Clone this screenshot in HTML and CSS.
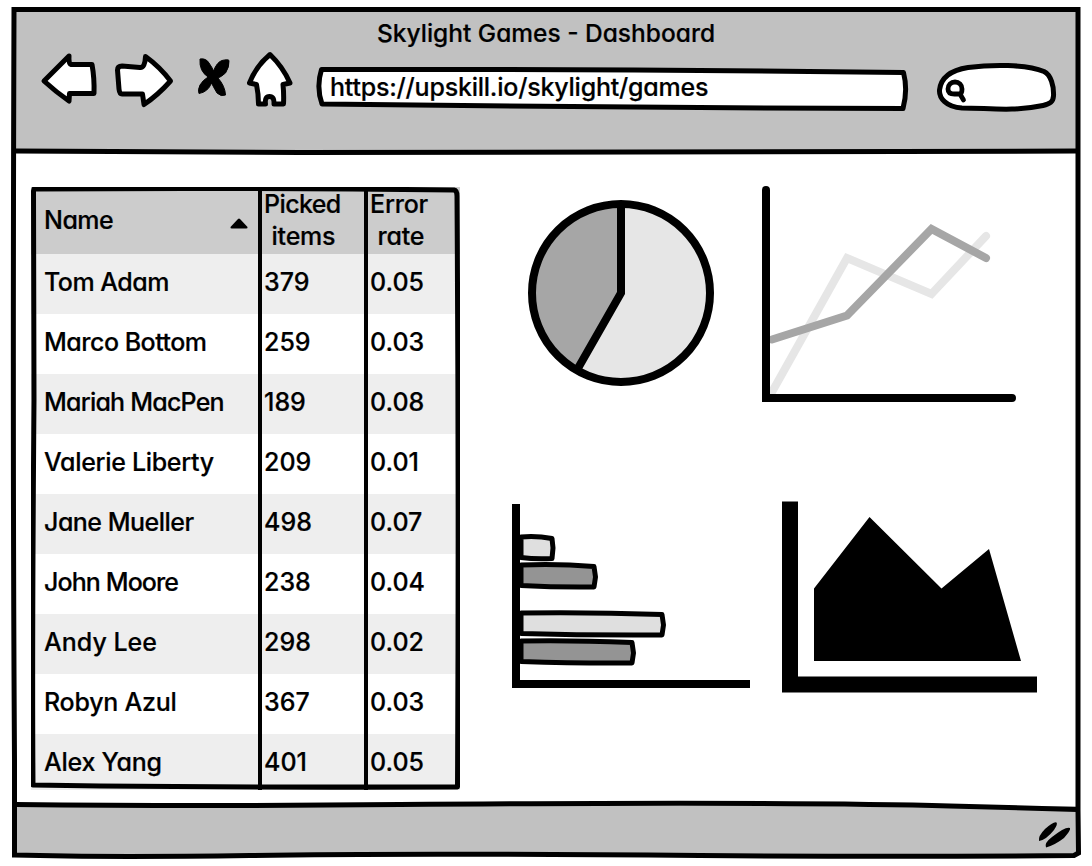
FILE: index.html
```html
<!DOCTYPE html>
<html lang="en">
<head>
<meta charset="utf-8">
<title>Skylight Games - Dashboard</title>
<link rel="stylesheet" href="styles.css">
</head>
<body>
<div class="window">
  <header class="toolbar">
    <h1 class="title">Skylight Games - Dashboard</h1>
    <div class="controls">
      <svg class="nav" width="255" height="62" viewBox="40 50 255 62" aria-hidden="true">
        <g class="ink">
          <path d="M69 56 L44 81 Q56 92 69 101 L69.500 93.500 L94 93.500 Q94.500 78 92 64.500 L71 64.500 Q68.500 64 69 56Z"/>
          <path d="M145.500 56.500 Q160 67 170.500 81 Q158 95 144 104.500 L142.500 94 L122 94 Q119.500 94 119 89 L117.500 70 Q117.500 66 122 66 L140 67.500 Q145 68 145.500 56.500Z"/>
          <path d="M270 54.500 Q256 66 249.500 83 L256.500 84.500 Q258.500 94 258.500 104 L265.500 104 Q264.500 96.500 269.500 96.500 Q274.500 96.500 274 104 L283.500 104 Q284 94 283 84.500 L290 83 Q283 67 270 54.500Z"/>
        </g>
        <path stroke="#000" stroke-width="1" stroke-linejoin="round" d="M200 59 Q206 58 209 63 Q212.500 68 213.500 71 Q217 62 222 60.500 Q228 59 229 60.500 Q229.500 67 225.500 73 Q221 77 218 78 Q225 86 225.500 95 Q221 97 217 93 Q214 88 211.500 83 Q208 92 199 93.500 Q197.500 90 200 85 Q203 80 208 77 Q199 71 200 59Z"/>
      </svg>
      <div class="address">
        <svg class="shape" viewBox="316 64 594 48" aria-hidden="true"><path class="ink" d="M321.500 69.500 Q316 87 322 104 Q600 107.500 903 108.500 Q908 90 903.500 72.500 Q600 69 321.500 69.500Z"/></svg>
        <span>https://upskill.io/skylight/games</span>
      </div>
      <svg class="search" width="124" height="54" viewBox="935 60 124 54" aria-hidden="true">
        <path class="ink" d="M962 108 C946 107 939 98 939.500 90 C941 77 952 70 968 67.500 C991 64.500 1026 64 1044 71.500 C1051 75 1054 86 1053.500 96 C1053 102 1050 104 1043 105.500 C1012 112 989 108 962 108Z"/>
        <path class="lens" d="M962 89 C962 85 959 82 955 82 C951 82 948 85 948 89 C948 93 951 94 954.500 94 L960 94 Q962 93 962 89 M960 94 L963.500 100"/>
      </svg>
    </div>
  </header>

  <main class="content">
    <section class="table-wrap">
      <table>
        <colgroup><col class="c1"><col class="c2"><col class="c3"></colgroup>
        <thead><tr><th><div class="sort"><span>Name</span><svg width="18" height="11" viewBox="0 0 18 11" aria-hidden="true"><path d="M.5 9 L8 1 Q9 0 10 1 L17.500 9 Q18 10.500 16 10.500 H2 Q0 10.500 .5 9Z"/></svg></div></th><th class="two">Picked
 items</th><th class="two">Error
 rate</th></tr></thead>
        <tbody>
          <tr><td>Tom Adam</td><td>379</td><td>0.05</td></tr>
          <tr><td>Marco Bottom</td><td>259</td><td>0.03</td></tr>
          <tr><td>Mariah MacPen</td><td>189</td><td>0.08</td></tr>
          <tr><td>Valerie Liberty</td><td>209</td><td>0.01</td></tr>
          <tr><td>Jane Mueller</td><td>498</td><td>0.07</td></tr>
          <tr><td>John Moore</td><td>238</td><td>0.04</td></tr>
          <tr><td>Andy Lee</td><td>298</td><td>0.02</td></tr>
          <tr><td>Robyn Azul</td><td>367</td><td>0.03</td></tr>
          <tr><td>Alex Yang</td><td>401</td><td>0.05</td></tr>
        </tbody>
      </table>
      <svg class="shape" viewBox="31 187 429 603" aria-hidden="true">
        <path class="ink bare" d="M34 189 Q230 187.500 454 190 Q457 190.500 457 196 Q459 500 457.500 787 Q250 787.500 100 786 L33 785 Q32 650 34 400 Q34 280 33.500 191Z"/>
        <path class="rule" d="M260 186 V790 M366 186 V790"/>
      </svg>
    </section>

    <section class="charts">
      <svg width="250" height="230" viewBox="510 180 250 230" role="img" aria-label="Pie chart">
        <circle cx="621" cy="293" r="89" fill="#e6e6e6"/>
        <path d="M621 293 V204 A89 89 0 0 0 578 371Z" fill="#a6a6a6"/>
        <circle class="thick" cx="621" cy="293" r="89"/>
        <path class="thick" d="M621 204 V293 L577 370"/>
      </svg>
      <svg width="290" height="230" viewBox="760 180 290 230" role="img" aria-label="Line chart">
        <path class="series light" d="M772 392 L847 258 L931.500 294 L986 236"/>
        <path class="series dark" d="M772 339.500 L847 315.500 L931.500 229 L986 258"/>
        <path class="thick round" d="M766 190 V398 H1012"/>
      </svg>
      <svg width="250" height="200" viewBox="510 500 250 200" role="img" aria-label="Bar chart">
        <g class="bar pale">
          <path d="M521 537 Q536 535.500 552 538.500 L553 548 L552 558.500 Q536 559.500 521 557.500Z"/>
          <path d="M521 613 Q590 612 662 614.500 L663.500 625 L662 635 Q590 635.500 521 633.500Z"/>
        </g>
        <g class="bar deep">
          <path d="M521 565 Q558 563.500 594 566.500 L595.500 577 L594 587 Q558 587.500 521 585.500Z"/>
          <path d="M521 641 Q570 640 632 642.500 L633.500 653 L632 663 Q580 663.500 521 661.500Z"/>
        </g>
        <path class="thick" d="M516 504 V684 H750"/>
      </svg>
      <svg width="290" height="200" viewBox="760 500 290 200" role="img" aria-label="Area chart">
        <path d="M782 501.500 H798 V676.500 H1037 V692.500 H782Z M814 588.500 L869.500 517 L941.500 588.500 L989 549 L1021 661 H814Z"/>
      </svg>
    </section>
  </main>

  <footer class="status">
    <svg width="36" height="28" viewBox="1036 820 36 28" aria-hidden="true">
      <path d="M1039 841 Q1038 836 1045 829 Q1054 821 1056.500 822.500 Q1058 824 1054 830 Q1046 840 1039 841Z M1046 847.500 Q1044 843 1052 837 Q1066 826 1070 828 Q1071 830 1064 838 Q1055 845 1046 847.500Z"/>
    </svg>
  </footer>

  <svg class="frame" viewBox="0 0 1092 866" aria-hidden="true">
    <path d="M14 9.500 H1078 V810 L1078.500 853 L1074 855.500 Q900 857 700 855.500 Q400 853 250 855.500 Q100 857.500 14.500 855 L14.500 760 Q12.500 450 14 9.500Z"/>
    <path d="M16 151 Q150 152 300 152.500 Q700 153 900 151.500 L1077 151 M16 804.500 Q200 806.500 400 804.500 Q800 801.500 950 806 L1077 809.500"/>
  </svg>
</div>
</body>
</html>
```
FILE: styles.css
```css
* { box-sizing: border-box; }
body { margin: 0; background: #fff; color: #000; font: 500 25px/32px Inter, "Noto Sans", sans-serif; font-feature-settings: "cv11"; -webkit-text-stroke: .2px #000; }
svg { display: block; }

.window { position: relative; width: 1092px; height: 866px; padding: 10px 14px; display: flex; flex-direction: column; overflow: hidden; }
.frame { position: absolute; inset: 0; width: 1092px; height: 866px; fill: none; stroke: #000; stroke-width: 5; pointer-events: none; }

.ink { fill: #fff; stroke: #000; stroke-width: 5; stroke-linejoin: round; }
.bare { fill: none; }
.shape { position: absolute; inset: 0; width: 100%; height: 100%; }

.toolbar { height: 142px; background: #c1c1c1; padding-top: 7px; }
.title { margin: 0 0 1px; font-size: 24.5px; line-height: 32px; font-weight: 500; text-align: center; }
.controls { display: flex; padding-left: 26px; align-items: flex-start; }
.address { position: relative; width: 594px; height: 48px; margin: 14px 0 0 21px; padding: 7px 0 0 14px; letter-spacing: -.22px; }
.address span { position: relative; }
.search { margin: 10px 0 0 25px; }
.lens { fill: none; stroke: #000; stroke-width: 4.800; stroke-linecap: round; stroke-linejoin: round; }

.content { height: 654px; display: flex; padding: 35px 0 0 17px; }
.table-wrap { position: relative; width: 429px; height: 603px; flex: none; }
table { width: 429px; table-layout: fixed; border-collapse: collapse; }
.c1 { width: 229px; }
.c2 { width: 106px; }
.c3 { width: 94px; }
th, td { padding: 0 0 0 4px; text-align: left; font-weight: 500; white-space: pre; }
th { height: 67px; background: #ccc; vertical-align: top; }
th.two { padding-top: 1px; letter-spacing: -.2px; word-spacing: 1px; }
th.two:nth-child(2)::first-line { letter-spacing: -.6px; }
td { height: 60px; line-height: 56px; vertical-align: top; }
th:first-child, td:first-child { padding-left: 13px; letter-spacing: -.5px; }
tr:nth-child(3) td:first-child { letter-spacing: -.78px; }
tr:nth-child(4) td:first-child { letter-spacing: -.32px; }
tr:nth-child(6) td:first-child { letter-spacing: -.9px; }
tr:nth-child(7) td:first-child { letter-spacing: 0; }
tr:nth-child(n+8) td:first-child { letter-spacing: -.25px; }
.sort { display: flex; align-items: center; justify-content: space-between; height: 66px; padding-right: 12px; }
.sort svg { margin-top: 6px; }
tbody tr:nth-child(odd) { background: #eee; }
tbody tr:last-child td { height: 56px; }
.rule { stroke: #000; stroke-width: 4; }

.charts { display: grid; grid-template-columns: 250px 290px; grid-template-rows: 230px 200px; row-gap: 90px; margin: -7px 0 0 50px; }
.thick { fill: none; stroke: #000; stroke-width: 8; }
.round { stroke-linecap: round; }
.series { fill: none; stroke-width: 8; stroke-linecap: round; }
.light { stroke: #e6e6e6; }
.dark { stroke: #a6a6a6; }
.bar { stroke: #000; stroke-width: 5; stroke-linejoin: round; }
.pale { fill: #dfdfdf; }
.deep { fill: #949494; }

.status { flex: 1; background: #c1c1c1; display: flex; justify-content: flex-end; padding: 14px 6px 0 0; }
```
